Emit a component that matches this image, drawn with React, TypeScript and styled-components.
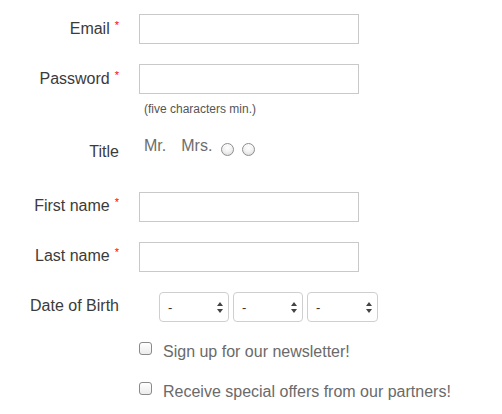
import React from "react";
import styled, { createGlobalStyle } from "styled-components";

const Global = createGlobalStyle`
  html, body { margin: 0; padding: 0; background: #fff; }
  body { font-family: "Liberation Sans", Arial, Helvetica, sans-serif; }
  * { box-sizing: border-box; }
`;

const Form = styled.form`
  display: flex;
  flex-direction: column;
  padding-top: 14px;
  width: 502px;
`;

const Row = styled.div<{ $mt?: number; $h?: number }>`
  display: grid;
  grid-template-columns: 119px 1fr;
  column-gap: 20px;
  align-items: start;
  margin-top: ${(p) => p.$mt ?? 0}px;
  height: ${(p) => (p.$h ? `${p.$h}px` : "auto")};
`;

const Label = styled.label<{ $offset?: number }>`
  display: block;
  text-align: right;
  font-size: 16px;
  line-height: 18px;
  color: #3b3b3b;
  white-space: nowrap;
  padding-top: ${(p) => p.$offset ?? 0}px;
`;

const Req = styled.span`
  display: inline-block;
  margin-left: 5px;
  font-size: 11px;
  line-height: 10px;
  vertical-align: top;
  color: #f00;
`;

const TextInput = styled.input`
  display: block;
  width: 220px;
  height: 30px;
  border: 1px solid #c9c9c9;
  border-radius: 0;
  background: #fff;
  padding: 0 6px;
  font: inherit;
  outline: none;
`;

const Hint = styled.div`
  margin-top: 8px;
  padding-left: 144px;
  font-size: 12px;
  line-height: 14px;
  color: #555;
`;

const Options = styled.div`
  display: flex;
  align-items: flex-start;
  padding-left: 5px;
`;

const OptionText = styled.span<{ $ml?: number }>`
  font-size: 16px;
  line-height: 18px;
  color: #6d6d6d;
  margin-left: ${(p) => p.$ml ?? 0}px;
`;

const Radio = styled.input.attrs({ type: "radio" })<{ $ml?: number }>`
  appearance: none;
  -webkit-appearance: none;
  margin: 6px 0 0 ${(p) => p.$ml ?? 0}px;
  width: 13px;
  height: 13px;
  border-radius: 50%;
  border: 1px solid #8e8e8e;
  background: radial-gradient(circle at 50% 35%, #ffffff 0%, #f2f2f2 45%, #d4d4d4 100%);
  box-shadow: inset 0 1px 1px rgba(255, 255, 255, 0.8);
`;

const Selects = styled.div`
  display: flex;
  gap: 4px;
  padding-left: 20px;
`;

const SelectWrap = styled.div<{ $w: number }>`
  position: relative;
  width: ${(p) => p.$w}px;
  height: 30px;
`;

const Select = styled.select`
  appearance: none;
  -webkit-appearance: none;
  width: 100%;
  height: 100%;
  border: 1px solid #cfcfcf;
  border-radius: 4px;
  background: #fff;
  padding: 0 16px 0 8px;
  font-family: "Liberation Sans", Arial, sans-serif;
  font-size: 13px;
  color: #333;
  outline: none;
`;

const Arrows = styled.svg`
  position: absolute;
  right: 6px;
  top: 10px;
  width: 6px;
  height: 11px;
  pointer-events: none;
`;

const CheckRow = styled.label<{ $mt: number }>`
  display: flex;
  align-items: flex-start;
  margin-top: ${(p) => p.$mt}px;
  padding-left: 139px;
`;

const Check = styled.input.attrs({ type: "checkbox" })`
  appearance: none;
  -webkit-appearance: none;
  margin: 0;
  width: 13px;
  height: 13px;
  border: 1px solid #8a8a8a;
  border-radius: 3px;
  background: linear-gradient(#ffffff, #ececec);
  flex: none;
`;

const CheckText = styled.span`
  margin-left: 11px;
  padding-top: 1px;
  font-size: 16px;
  line-height: 18px;
  color: #6a6a6a;
`;

const DateSelect = ({ w }: { w: number }) => (
  <SelectWrap $w={w}>
    <Select defaultValue="-">
      <option value="-">-</option>
    </Select>
    <Arrows viewBox="0 0 6 11">
      <path d="M3 0 L6 4 L0 4 Z" fill="#444" />
      <path d="M0 7 L6 7 L3 11 Z" fill="#444" />
    </Arrows>
  </SelectWrap>
);

export default function App() {
  return (
    <>
      <Global />
      <Form>
        <Row>
          <Label $offset={6}>
            Email<Req>*</Req>
          </Label>
          <TextInput type="text" />
        </Row>
        <Row $mt={20}>
          <Label $offset={6}>
            Password<Req>*</Req>
          </Label>
          <TextInput type="password" />
        </Row>
        <Hint>(five characters min.)</Hint>
        <Row $mt={21} $h={23}>
          <Label $offset={6}>Title</Label>
          <Options>
            <OptionText>Mr.</OptionText>
            <OptionText $ml={15}>Mrs.</OptionText>
            <Radio name="title" $ml={9} />
            <Radio name="title" $ml={8} />
          </Options>
        </Row>
        <Row $mt={32}>
          <Label $offset={5}>
            First name<Req>*</Req>
          </Label>
          <TextInput type="text" />
        </Row>
        <Row $mt={20}>
          <Label $offset={5}>
            Last name<Req>*</Req>
          </Label>
          <TextInput type="text" />
        </Row>
        <Row $mt={20}>
          <Label $offset={5}>Date of Birth</Label>
          <Selects>
            <DateSelect w={70} />
            <DateSelect w={70} />
            <DateSelect w={71} />
          </Selects>
        </Row>
        <CheckRow $mt={20}>
          <Check />
          <CheckText>Sign up for our newsletter!</CheckText>
        </CheckRow>
        <CheckRow $mt={21}>
          <Check />
          <CheckText>Receive special offers from our partners!</CheckText>
        </CheckRow>
      </Form>
    </>
  );
}
